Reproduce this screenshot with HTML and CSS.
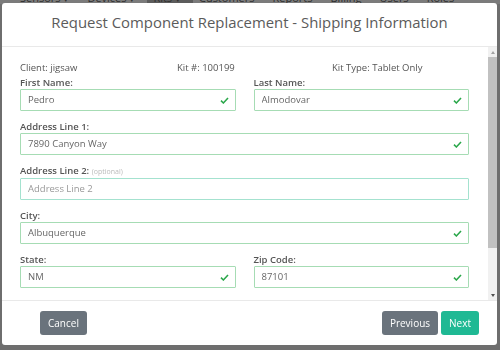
FILE: index.html
```html
<!DOCTYPE html>
<html lang="en">
<head>
    <meta charset="UTF-8">
    <meta name="viewport" content="width=device-width, initial-scale=1.0">
    <title>Request Component Replacement</title>
    <link rel="stylesheet" href="styles.css">
</head>
<body>
    <div class="navbar">
        <span class="nav-item">Sensors ▾</span>
        <span class="nav-item">Devices ▾</span>
        <span class="nav-item active">Kits ▾</span>
        <span class="nav-item">Customers</span>
        <span class="nav-item">Reports</span>
        <span class="nav-item">Billing</span>
        <span class="nav-item">Users</span>
        <span class="nav-item">Roles</span>
    </div>

    <div class="modal">
        <div class="modal-header">
            <h2>Request Component Replacement - Shipping Information</h2>
        </div>
        <div class="modal-main">
            <div class="modal-body">
                <div class="kit-info">
                    <span>Client: jigsaw</span>
                    <span>Kit #: 100199</span>
                    <span>Kit Type: Tablet Only</span>
                </div>
                <div class="form-row">
                    <div class="form-group">
                        <label>First Name:</label>
                        <div class="field valid">
                            <input type="text" value="Pedro">
                            <svg class="check" viewBox="0 0 10 8"><polyline points="1,4.2 3.7,6.8 9,1.2"/></svg>
                        </div>
                    </div>
                    <div class="form-group">
                        <label>Last Name:</label>
                        <div class="field valid">
                            <input type="text" value="Almodovar">
                            <svg class="check" viewBox="0 0 10 8"><polyline points="1,4.2 3.7,6.8 9,1.2"/></svg>
                        </div>
                    </div>
                </div>
                <div class="form-group">
                    <label>Address Line 1:</label>
                    <div class="field valid">
                        <input type="text" value="7890 Canyon Way">
                        <svg class="check" viewBox="0 0 10 8"><polyline points="1,4.2 3.7,6.8 9,1.2"/></svg>
                    </div>
                </div>
                <div class="form-group">
                    <label>Address Line 2: <small>(optional)</small></label>
                    <div class="field optional">
                        <input type="text" placeholder="Address Line 2">
                    </div>
                </div>
                <div class="form-group">
                    <label>City:</label>
                    <div class="field valid">
                        <input type="text" value="Albuquerque">
                        <svg class="check" viewBox="0 0 10 8"><polyline points="1,4.2 3.7,6.8 9,1.2"/></svg>
                    </div>
                </div>
                <div class="form-row">
                    <div class="form-group">
                        <label>State:</label>
                        <div class="field valid">
                            <input type="text" value="NM">
                            <svg class="check" viewBox="0 0 10 8"><polyline points="1,4.2 3.7,6.8 9,1.2"/></svg>
                        </div>
                    </div>
                    <div class="form-group">
                        <label>Zip Code:</label>
                        <div class="field valid">
                            <input type="text" value="87101">
                            <svg class="check" viewBox="0 0 10 8"><polyline points="1,4.2 3.7,6.8 9,1.2"/></svg>
                        </div>
                    </div>
                </div>
                <div class="form-row">
                    <div class="form-group">
                        <label>Phone:</label>
                        <div class="field">
                            <input type="text" placeholder="Phone">
                        </div>
                    </div>
                    <div class="form-group">
                        <label>Phone 2: <small>(optional)</small></label>
                        <div class="field">
                            <input type="text" placeholder="Phone 2">
                        </div>
                    </div>
                </div>
            </div>
            <div class="scrollbar">
                <span class="arrow up"></span>
                <div class="track"><div class="thumb"></div></div>
                <span class="arrow down"></span>
            </div>
        </div>
        <div class="modal-footer">
            <button class="btn btn-secondary cancel-btn">Cancel</button>
            <div class="nav-buttons">
                <button class="btn btn-secondary">Previous</button>
                <button class="btn btn-primary">Next</button>
            </div>
        </div>
    </div>
</body>
</html>
```

FILE: styles.css
```css
* {
    margin: 0;
    padding: 0;
    box-sizing: border-box;
    font-family: 'Open Sans', sans-serif;
}
body {
    background: #6e6e6e;
    width: 500px;
    height: 350px;
    overflow: hidden;
}
.navbar {
    display: flex;
    height: 4px;
    background: #7b7b7b;
    overflow: hidden;
    padding-left: 14px;
}
.nav-item {
    font-size: 11px;
    line-height: 12px;
    margin-top: -8px;
    color: #2e2e2e;
    padding: 0 12px 0 6px;
}
.nav-item.active {
    background: #5c5c5c;
}
.modal {
    position: fixed;
    top: 3px;
    left: 2px;
    width: 495px;
    height: 342px;
    background: #fff;
    border-radius: 3px;
    display: flex;
    flex-direction: column;
}
.modal-header {
    padding: 7px 10px 12px;
    border-bottom: 1px solid #e9e9e9;
    text-align: center;
}
.modal-header h2 {
    font-size: 14.9px;
    line-height: 24px;
    font-weight: 400;
    color: #5b5b5b;
}
.modal-main {
    flex: 1;
    display: flex;
    min-height: 0;
}
.modal-body {
    flex: 1;
    overflow-y: scroll;
    scrollbar-width: none;
    padding: 15px 19px 15px 18px;
    color: #555;
}
.scrollbar {
    width: 9px;
    display: flex;
    flex-direction: column;
    background: #f1f1f1;
}
.arrow {
    height: 10px;
    display: flex;
    justify-content: center;
    align-items: center;
}
.arrow::before {
    content: "";
    border-left: 2.5px solid transparent;
    border-right: 2.5px solid transparent;
}
.arrow.up::before {
    border-bottom: 3px solid #a3a3a3;
}
.arrow.down::before {
    border-top: 3px solid #505050;
}
.track {
    flex: 1;
}
.thumb {
    height: 82%;
    background: #c1c1c1;
}
.kit-info {
    display: grid;
    grid-template-columns: 157px 155px auto;
    font-size: 9.5px;
    line-height: 12px;
    margin-bottom: 3px;
}
.form-row {
    display: grid;
    grid-template-columns: 1fr 1fr;
    column-gap: 18px;
}
.form-group {
    margin-bottom: 10px;
}
.form-group label {
    display: block;
    font-size: 9.5px;
    line-height: 12px;
    font-weight: 600;
    color: #555;
}
.form-group label small {
    font-size: 7px;
    font-weight: 400;
    color: #bbb;
}
.field {
    position: relative;
    height: 22px;
    border: 1px solid #ccc;
    border-radius: 1px;
}
.field.valid {
    border-color: #a6dcb4;
}
.field.optional {
    border-color: #a4e2cf;
}
.field input {
    display: block;
    width: 100%;
    height: 20px;
    line-height: 18px;
    border: none;
    outline: none;
    background: transparent;
    padding: 0 24px 1px 7px;
    font-size: 9.5px;
    color: #666;
}
.field input::placeholder {
    color: #999;
}
.check {
    position: absolute;
    right: 6px;
    top: 7px;
    width: 9px;
    height: 7px;
    fill: none;
    stroke: #2aa74a;
    stroke-width: 1.8;
}
.modal-footer {
    display: flex;
    justify-content: space-between;
    align-items: center;
    height: 45px;
    padding: 0 18px 0 38px;
    border-top: 1px solid #e9e9e9;
}
.nav-buttons {
    display: flex;
    gap: 3px;
}
.btn {
    height: 24px;
    padding: 0 8px;
    border: none;
    border-radius: 3px;
    font-size: 10px;
    color: #fff;
    cursor: pointer;
}
.btn-secondary {
    background: #6a737c;
}
.btn-primary {
    background: #1fb994;
}
```
